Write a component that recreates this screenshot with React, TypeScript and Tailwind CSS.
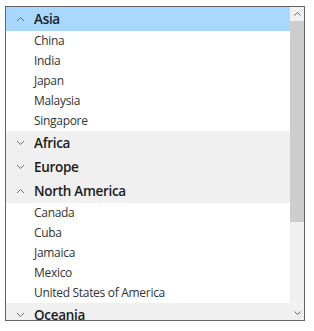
import { useState } from "react";

type Group = { name: string; items: string[]; open: boolean };

const groups: Group[] = [
  { name: "Asia", items: ["China", "India", "Japan", "Malaysia", "Singapore"], open: true },
  { name: "Africa", items: [], open: false },
  { name: "Europe", items: [], open: false },
  {
    name: "North America",
    items: ["Canada", "Cuba", "Jamaica", "Mexico", "United States of America"],
    open: true,
  },
  { name: "Oceania", items: [], open: false },
];

const Chevron = ({ up }: { up: boolean }) => (
  <svg width="9" height="6" viewBox="0 0 9 6" className="shrink-0">
    <path
      d={up ? "M1 5 L4.5 1.5 L8 5" : "M1 1 L4.5 4.5 L8 1"}
      fill="none"
      stroke="#6b6b6b"
      strokeWidth="1"
    />
  </svg>
);

const ScrollArrow = ({ up }: { up: boolean }) => (
  <svg width="7" height="4" viewBox="0 0 7 4">
    <path
      d={up ? "M0.5 3.5 L3.5 0.5 L6.5 3.5" : "M0.5 0.5 L3.5 3.5 L6.5 0.5"}
      fill="none"
      stroke="#606060"
      strokeWidth="1"
    />
  </svg>
);

const App = () => {
  const [selected] = useState("Asia");

  return (
    <div className="min-h-[331px] bg-white pl-[5px] pt-[6px] font-['Segoe_UI','Open_Sans',sans-serif]">
      <div className="flex h-[315px] w-[300px] border border-[#646464] bg-white">
        <div className="h-full w-[284px] overflow-hidden">
          {groups.map((g) => (
            <div key={g.name}>
              <div
                className={`flex h-6 items-center gap-[9px] pl-[10px] text-[13.5px] font-[550] tracking-[-0.3px] text-[#1b1b1b] ${
                  g.name === selected ? "bg-[#a8d8fe]" : "bg-[#f0f0f0]"
                }`}
              >
                <Chevron up={g.open} />
                <span>{g.name}</span>
              </div>
              {g.items.map((item) => (
                <div
                  key={item}
                  className="flex h-5 items-center pl-[28px] text-[12px] tracking-[-0.3px] text-[#333]"
                >
                  {item}
                </div>
              ))}
            </div>
          ))}
        </div>
        <div className="flex h-full w-[14px] flex-col bg-[#f0f0f0]">
          <div className="flex h-[14px] items-center justify-center">
            <ScrollArrow up />
          </div>
          <div className="h-[201px] bg-[#cdcdcd]" />
          <div className="flex-1" />
          <div className="flex h-[14px] items-center justify-center">
            <ScrollArrow up={false} />
          </div>
        </div>
      </div>
    </div>
  );
};

export default App;
